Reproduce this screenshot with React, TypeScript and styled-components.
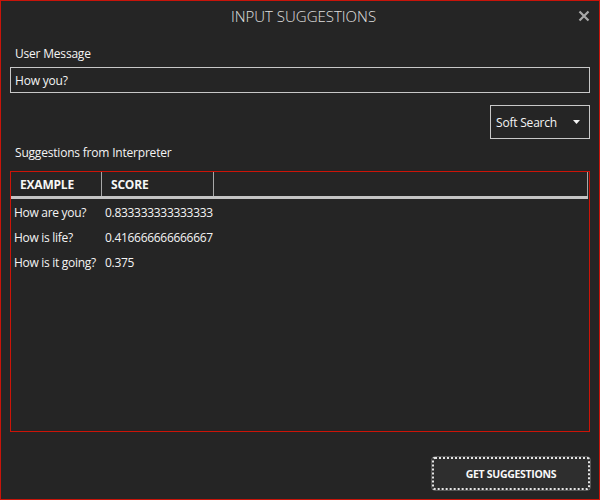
import React from "react";
import styled, { createGlobalStyle } from "styled-components";

const Global = createGlobalStyle`
  html, body { margin: 0; padding: 0; background: #252525; }
  * { box-sizing: border-box; }
`;

const Window = styled.div`
  width: 600px;
  height: 500px;
  background: #252525;
  border: 1px solid #c8140a;
  display: flex;
  flex-direction: column;
  font-family: "Open Sans", "Noto Sans", sans-serif;
  color: #f2f2f2;
`;

const TitleBar = styled.div`
  height: 32px;
  padding-bottom: 3px;
  display: grid;
  grid-template-columns: 1fr auto 1fr;
  align-items: center;
`;

const Title = styled.div`
  grid-column: 2;
  font-size: 15px;
  font-weight: 300;
  color: #e0e0e0;
  padding-left: 7px;
`;

const CloseButton = styled.div`
  grid-column: 3;
  justify-self: end;
  width: 12px;
  height: 12px;
  margin-right: 9px;
  display: flex;
`;

const Body = styled.div`
  flex: 1;
  display: flex;
  flex-direction: column;
  padding: 13px 9px 9px 9px;
`;

const Label = styled.div`
  font-size: 12px;
  line-height: 16px;
  padding-left: 5px;
  color: #f4f4f4;
  letter-spacing: -0.2px;
`;

const TextBox = styled.div`
  margin-top: 5px;
  height: 26px;
  border: 1px solid #c8c8c8;
  font-size: 12px;
  padding-left: 4px;
  display: flex;
  align-items: center;
  color: #f4f4f4;
  letter-spacing: -0.2px;
`;

const ControlRow = styled.div`
  margin-top: 12px;
  display: flex;
  justify-content: flex-end;
`;

const Select = styled.div`
  width: 100px;
  height: 34px;
  border: 1px solid #c8c8c8;
  display: flex;
  align-items: center;
  justify-content: space-between;
  padding: 0 9px 0 5px;
  font-size: 12px;
  color: #f4f4f4;
  letter-spacing: -0.2px;
`;

const SectionLabel = styled(Label)`
  margin-top: 6px;
`;

const Table = styled.div`
  margin-top: 10px;
  height: 261px;
  border: 1px solid #cc1408;
  display: flex;
  flex-direction: column;
`;

const HeaderRow = styled.div`
  display: flex;
  height: 27px;
  border-bottom: 3px solid #c4c4c4;
  margin-right: 1px;
`;

const HeaderCell = styled.div<{ $w?: number }>`
  ${(p) => (p.$w ? `width: ${p.$w}px;` : "flex: 1;")}
  border-right: 1px solid #a8a8a8;
  font-size: 12px;
  font-weight: 700;
  display: flex;
  align-items: center;
  padding-left: 9px;
  color: #f6f6f6;
  letter-spacing: -0.2px;
`;

const Rows = styled.div`
  padding-top: 1px;
  display: flex;
  flex-direction: column;
`;

const Row = styled.div`
  display: flex;
  height: 25px;
  align-items: center;
  font-size: 12px;
  color: #f4f4f4;
  letter-spacing: -0.3px;
`;

const Cell = styled.div<{ $w: number; $pad: number }>`
  width: ${(p) => p.$w}px;
  padding-left: ${(p) => p.$pad}px;
  white-space: nowrap;
`;

const Footer = styled.div`
  margin-top: auto;
  display: flex;
  justify-content: flex-end;
`;

const Button = styled.div`
  width: 158px;
  height: 33px;
  border-radius: 3px;
  border: 2px dotted #e6e6e6;
  background: #2e2e2e;
  box-shadow: 0 0 0 0.5px #888;
  display: flex;
  align-items: center;
  justify-content: center;
  font-size: 10.5px;
  font-weight: 700;
  letter-spacing: -0.3px;
  color: #f8f8f8;
`;

const rows = [
  { ex: "How are you?", score: "0.833333333333333" },
  { ex: "How is life?", score: "0.416666666666667" },
  { ex: "How is it going?", score: "0.375" },
];

export default function App() {
  return (
    <>
      <Global />
      <Window>
        <TitleBar>
          <Title>INPUT SUGGESTIONS</Title>
          <CloseButton>
            <svg width="12" height="12" viewBox="0 0 12 12">
              <path d="M1.5 1.5 L10.5 10.5 M10.5 1.5 L1.5 10.5" stroke="#a8a8a8" strokeWidth="2.2" />
            </svg>
          </CloseButton>
        </TitleBar>
        <Body>
          <Label>User Message</Label>
          <TextBox>How you?</TextBox>
          <ControlRow>
            <Select>
              <span>Soft Search</span>
              <svg width="7" height="4" viewBox="0 0 7 4">
                <path d="M0 0 H7 L3.5 4 Z" fill="#f4f4f4" />
              </svg>
            </Select>
          </ControlRow>
          <SectionLabel>Suggestions from Interpreter</SectionLabel>
          <Table>
            <HeaderRow>
              <HeaderCell $w={91}>EXAMPLE</HeaderCell>
              <HeaderCell $w={112}>SCORE</HeaderCell>
              <HeaderCell />
            </HeaderRow>
            <Rows>
              {rows.map((r) => (
                <Row key={r.ex}>
                  <Cell $w={91} $pad={3}>{r.ex}</Cell>
                  <Cell $w={112} $pad={3}>{r.score}</Cell>
                </Row>
              ))}
            </Rows>
          </Table>
          <Footer>
            <Button>GET SUGGESTIONS</Button>
          </Footer>
        </Body>
      </Window>
    </>
  );
}
